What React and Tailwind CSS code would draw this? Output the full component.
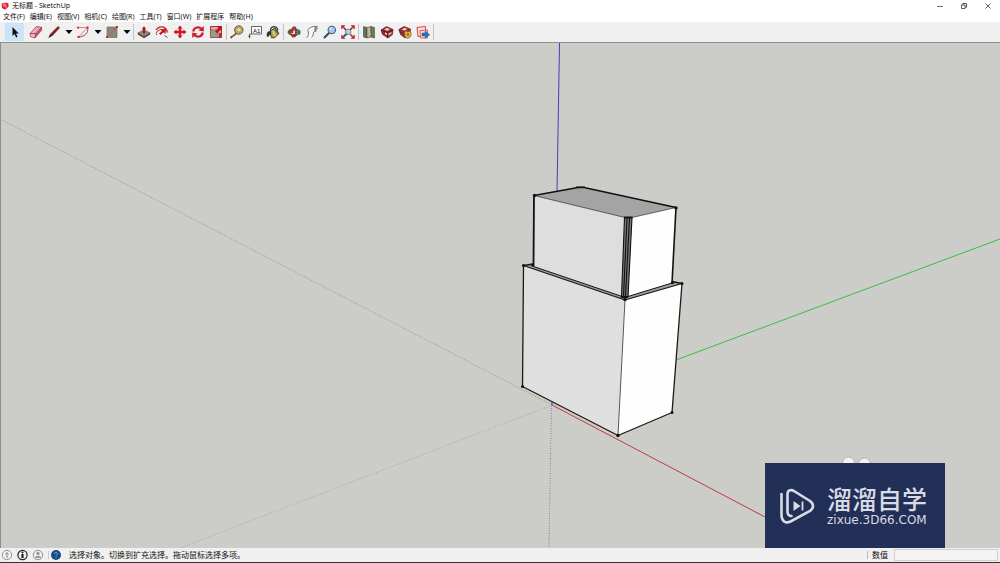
import React, { useState } from 'react';

const MENUS = ['文件(F)', '编辑(E)', '视图(V)', '相机(C)', '绘图(R)', '工具(T)', '窗口(W)', '扩展程序', '帮助(H)'];

// Dibujos de cada herramienta (lienzo de 14x14)
const ICONS = {
  select: <path d="M4.500 2v9l2-2 1.600 3.400 1.500-.7-1.600-3.300h2.800z" fill="#111" />,
  eraser: (
    <g stroke="#8d3348" strokeWidth=".7">
      <path d="M1 8.500 7.500 1.500l5 .8L7 9z" fill="#ee9aae" />
      <path d="M1 8.500 7 9l-1 3.800-4.500-1z" fill="#f4bcc9" />
      <path d="M7 9l5.500-6.700.2 3L6 12.800z" fill="#cf5f7b" />
      <path d="M4 7.500 8.500 3" stroke="#fbe0e6" />
    </g>
  ),
  pencil: (
    <g>
      <path d="M3 9.500 11 1.500l1.600 1.300L5 11z" fill="#8f1a1e" stroke="#5c1013" strokeWidth=".5" />
      <path d="M3 9.500 5 11l-3.800 2z" fill="#2a1b16" />
    </g>
  ),
  arc: (
    <g fill="none">
      <path d="M2 2.500h9.500L2.500 12" stroke="#dd7074" strokeWidth=".9" />
      <path d="M11.500 2.500C13 8 8 12 2.500 12" stroke="#8f4a4c" strokeWidth="1" />
      <path d="M1 1.800h2v1.600H1zM10.500 1.500h2v2h-2zM1.500 11h2v2h-2z" fill="#d2262c" />
    </g>
  ),
  rect: (
    <g>
      <path d="M2 2h10v10.500H2z" fill="#8d8577" stroke="#6a6458" strokeWidth=".6" />
      <path d="M3 11.500 11 3" stroke="#c4575a" strokeWidth=".9" />
      <path d="M1 11h2v2H1zM11 1h2v2h-2z" fill="#c9282e" />
    </g>
  ),
  pushpull: (
    <g>
      <path d="M.8 8 7 5l6.200 3L7 11.500z" fill="#8f8877" stroke="#4a453a" strokeWidth=".6" />
      <path d="M.8 8 7 11.500 13.200 8v1.500L7 13.200.8 9.500z" fill="#4b473c" />
      <path d="M7 1.200 9.300 4.200H8.100v4.300H5.900V4.200H4.700z" fill="#b4141b" />
    </g>
  ),
  follow: (
    <g fill="none">
      <path d="M1 5C4 .5 11 .5 12.500 7.500" stroke="#bb2930" strokeWidth="1.300" />
      <path d="M1 8.500c1.500-4 6-5 8-3" stroke="#c0545a" strokeWidth="1.100" />
      <path d="M5 4.500 11 3.500l-.5 5.500-1.900-1.700L5.500 10 4 8.500l3-2.700z" fill="#c8161d" />
      <path d="M9.500 10.500l3 2M2 9l-1 1" stroke="#5d564b" strokeWidth="1" />
    </g>
  ),
  move: (
    <path d="M7 .5 9.500 3.500H8.200V5.800H10.500V4.500L13.500 7l-3 2.500V8.200H8.200v2.300h1.300L7 13.500 4.500 10.500h1.300V8.200H3.500v1.300L.5 7l3-2.500v1.300h2.300V3.500H4.500z" fill="#cb1b22" />
  ),
  rotate: (
    <g fill="none" stroke="#c8202a" strokeWidth="2.200">
      <path d="M2.200 6.500C3 2 8 1.300 10.500 4" />
      <path d="M11.800 7.500C11 12 6 12.700 3.500 10" />
      <path d="M12.800 1v5.400l-5.300-1zM1.200 13V7.600l5.300 1z" fill="#c8202a" stroke="none" />
    </g>
  ),
  scale: (
    <g>
      <path d="M1.500 1.500h11v11h-11z" fill="#d9aaa6" stroke="#a93036" strokeWidth="1" />
      <path d="M1.500 5h7.500v7.500H1.500z" fill="#a2988a" stroke="#6d6257" strokeWidth=".6" />
      <path d="M7.500 1h5.500v5.500l-1.700-1.500L8 8.500 6 6.500l3.200-3.400z" fill="#bf1a21" />
      <path d="M10 8v4.500h2.500V8z" fill="#c4242b" />
    </g>
  ),
  tape: (
    <g>
      <path d="M1 12.500 7 8" stroke="#786833" strokeWidth="1.600" />
      <circle cx="8.800" cy="5" r="4.200" fill="#c9b366" stroke="#54481f" strokeWidth=".9" />
      <circle cx="9" cy="4.800" r="2.200" fill="#e9dba5" stroke="#84733a" strokeWidth=".5" />
      <path d="M1 11v2.500" stroke="#333" strokeWidth=".9" />
    </g>
  ),
  label: (
    <g>
      <path d="M3.500 1.500h10v7.500h-10z" fill="#fafafa" stroke="#444" strokeWidth=".8" />
      <path d="M3.500 9H1.500v4" fill="none" stroke="#444" strokeWidth=".8" />
      <path d="M.2 10.800h2.600L1.500 13.500z" fill="#444" />
      <text x="5" y="7.500" fontSize="6" fontFamily="Liberation Sans, sans-serif" fill="#111">A1</text>
    </g>
  ),
  paint: (
    <g>
      <path d="M3.500 6.500 9 3l4 5.500-4.500 4.200H5.500z" fill="#b0a050" stroke="#2c2a1b" strokeWidth=".9" />
      <path d="M4.500 6C.8 6 .3 9 1 12 3.500 11.500 3 9.500 5.500 8.500z" fill="#2f3526" />
      <path d="M4.500 6C4 .8 10.500 0 12 5.500" fill="none" stroke="#3c3c36" strokeWidth="1.300" />
      <path d="M6.500 6 9.500 11" stroke="#e8dc8c" strokeWidth="1.400" />
      <path d="M9 4.500 11.500 8" stroke="#55573c" strokeWidth="1.200" />
    </g>
  ),
  orbit: (
    <g fill="none">
      <ellipse cx="7" cy="7.200" rx="5.500" ry="2.800" stroke="#2a8a5b" strokeWidth="2" />
      <path d="M5.500 8C4.500 1 9 .5 9 6.500S6.500 12 5.500 10" stroke="#b3252f" strokeWidth="2" />
      <path d="M1 7 4.500 4.500v5z" fill="#b3252f" />
      <path d="M3.500 9.500h4.200l-2 3.500z" fill="#b3252f" />
      <path d="M9.500 7 13.200 5v5z" fill="#20734a" />
    </g>
  ),
  pan: (
    <path d="M1.500 12.500c2-.5 2-3 2-4.500 0-2-1.500-2-.5-3.500C4.500 3 6 2 8.500 1.500l4 .2-3 1.300 3 .5-3.200 1.500 2.200.7-3 1.300c-.2 2-.5 4.500-2 5.500" fill="#f7f7f7" stroke="#666" strokeWidth=".9" />
  ),
  zoom: (
    <g>
      <path d="M1.500 12.500 6 8" stroke="#3b4560" strokeWidth="2" strokeLinecap="round" />
      <circle cx="8.800" cy="5" r="3.700" fill="#a5c6e6" stroke="#45607f" strokeWidth="1.100" />
      <path d="M7 4.600c.3-1 1-1.500 2-1.500" stroke="#fff" fill="none" />
    </g>
  ),
  extents: (
    <g>
      <path d="M2.500 11.500 6 8.500" stroke="#3b4560" strokeWidth="1.800" />
      <path d="M2.500 2.500 5 5M11.500 2.500 9 5M11.500 11.500 9.500 9.500" stroke="#b31d26" strokeWidth="1.700" />
      <path d="M.3.300h4.200L.3 4.500zM13.700.300v4.200L9.500.300zM13.700 13.700H9.500l4.200-4.200zM.3 13.700V9.500l4.200 4.200z" fill="#b31d26" />
      <circle cx="7.200" cy="6.800" r="2.700" fill="#b4d4e8" stroke="#56788f" strokeWidth=".9" />
    </g>
  ),
  geo: (
    <g stroke="#4e4a35" strokeWidth=".6">
      <path d="M1.500 1.500 5 2.500v10.500l-3.500-1z" fill="#5b7253" />
      <path d="M5 2.500 9 1.500V12l-4 1z" fill="#b3b494" />
      <path d="M9 1.500l3.500 1V13L9 12z" fill="#6b7d5c" />
      <path d="M6 3.500 8.500 10" stroke="#dedbc6" />
    </g>
  ),
  warehouse: (
    <g>
      <path d="M1 5 6.500 1.500 13 4.500l-.5 5L8 13l-5.500-3.500z" fill="#8f2a30" stroke="#51171a" strokeWidth=".6" />
      <path d="M1 5l6.500 2.500L13 4.500M7.500 7.500V13" stroke="#5a1317" strokeWidth=".8" fill="none" />
      <path d="M4 4.500 7 2.800l3 1.400L7.500 6zM5 7.200l2 1v2l-2-1zM8.500 8.500l3-1.500v1.500l-3 2z" fill="#efc3c4" />
    </g>
  ),
  extension: (
    <g>
      <path d="M.8 4.500 6 1.500l6.500 2.500-.5 5.500L7 13 2.500 9.500z" fill="#8f2a30" stroke="#51171a" strokeWidth=".6" />
      <path d="M3.500 4.500 6.500 2.800l3 1.300L6.500 5.700z" fill="#efc3c4" />
      <path d="M6.500 7 8.500 5.800 9.800 7 11.800 6l1.500 2.500-.8 3.300L9.500 13.500 6.800 11.500z" fill="#dfae3a" stroke="#70531a" strokeWidth=".6" />
      <circle cx="9.900" cy="9.500" r="1.100" fill="#70531a" />
    </g>
  ),
  layout: (
    <g>
      <path d="M1 2.500 9.500 1.500v9L2 11.500z" fill="#fbe2e0" stroke="#d84045" strokeWidth="1" />
      <path d="M4 5.500 11.500 5v8H4.500z" fill="#fbd1cf" stroke="#d84045" strokeWidth=".8" />
      <path d="M6 8h3.200V6l4.500 3.800-4.500 3.400v-2.200H6z" fill="#2673bd" stroke="#174c80" strokeWidth=".4" />
    </g>
  ),
};

// Grupos de la barra; "caret" es la flecha del desplegable
const GROUPS = [
  ['eraser', 'pencil', 'caret', 'arc', 'caret', 'rect', 'caret'],
  ['pushpull', 'follow', 'move', 'rotate', 'scale'],
  ['tape', 'label', 'paint'],
  ['orbit', 'pan', 'zoom', 'extents'],
  ['geo', 'warehouse', 'extension', 'layout'],
];

const ToolIcon = ({ name }) => (
  <svg viewBox="0 0 14 14" className="size-3.5" aria-hidden="true">{ICONS[name]}</svg>
);

const TitleBar = () => (
  <header className="flex h-[11px] items-center justify-between bg-white pl-px">
    <div className="flex items-center gap-[3px]">
      <svg viewBox="0 0 8 8" className="size-2" aria-hidden="true">
        <path d="M.5 1.500 5 .5l2.500 1V5L4 7.800 1 6z" fill="#d9262d" />
        <path d="M1.500 2.500 5 2M2 4l3-.5V6" stroke="#f7b7b8" strokeWidth=".8" fill="none" />
      </svg>
      <h1 className="text-[7px] leading-[11px]">无标题 - SketchUp</h1>
    </div>
    <div className="flex">
      <button aria-label="最小化" className="flex h-[11px] w-6 items-center justify-center">
        <svg viewBox="0 0 6 6" className="size-1.5"><path d="M0 3.500h6" stroke="#444" strokeWidth=".8" /></svg>
      </button>
      <button aria-label="还原" className="flex h-[11px] w-6 items-center justify-center">
        <svg viewBox="0 0 6 6" className="size-1.5" fill="none" stroke="#333" strokeWidth=".8">
          <path d="M.5 2h3.500v3.500H.5zM1.800 2V.5h3.700v3.700H4" />
        </svg>
      </button>
      <button aria-label="关闭" className="flex h-[11px] w-6 items-center justify-center">
        <svg viewBox="0 0 6 6" className="size-1.5"><path d="M.5.500l5 5M5.500.500l-5 5" stroke="#333" strokeWidth=".8" /></svg>
      </button>
    </div>
  </header>
);

const Toolbar = ({ active, onPick }) => (
  <div className="flex h-[21px] items-center border-b border-[#8e8e8c] bg-[#f0f0f0] pl-[5px]">
    <button
      aria-label="select"
      onClick={() => onPick('select')}
      className={`mr-[3px] flex h-[18px] w-[19px] items-center justify-center ${active === 'select' ? 'bg-[#cce4f7]' : ''}`}
    >
      <ToolIcon name="select" />
    </button>
    {GROUPS.map((group) => (
      <div key={group[0]} className="flex items-center">
        {group.map((name, i) =>
          name === 'caret' ? (
            <button key={i} aria-label="更多" className="flex h-[18px] w-[11px] items-center justify-center">
              <svg viewBox="0 0 8 4" className="h-1 w-2"><path d="M.5 0h7L4 4z" fill="#000" /></svg>
            </button>
          ) : (
            <button
              key={i}
              aria-label={name}
              onClick={() => onPick(name)}
              className={`flex h-[18px] w-[18px] items-center justify-center ${active === name ? 'bg-[#cce4f7]' : ''}`}
            >
              <ToolIcon name={name} />
            </button>
          )
        )}
        <span className="mx-px h-4 w-px bg-[#c4c4c4]"></span>
      </div>
    ))}
  </div>
);

// Escena 3D: ejes y los dos volúmenes
const Scene = () => (
  <svg viewBox="1 43 999 505" preserveAspectRatio="xMidYMid slice" className="block h-full w-full" role="img" aria-label="模型">
    {/* Ejes */}
    <g fill="none" strokeWidth="1">
      <path d="M0 119 552 405" stroke="#c0807c" strokeDasharray="1 1.500" />
      <path d="M552 405 180 548" stroke="#8fb59b" strokeDasharray="1 1.500" />
      <path d="M551.500 403 549 548" stroke="#7e7eb8" strokeDasharray="1 1.500" />
      <path d="M559.500 43 557 192" stroke="#4040b8" />
      <path d="M676 360 1000 239" stroke="#3ebb44" />
      <path d="M552 405 824 548" stroke="#c03a40" />
      <path d="M552 405v-4" stroke="#4040b8" />
    </g>

    {/* Volumen inferior */}
    <path d="M523.500 265.500 533 264 672 281 682 283.500 625 300z" fill="#9c9c9a" />
    <path d="M523.500 266 625 300 618 435.500 522.500 386.500z" fill="#dfdfdf" />
    <path d="M625 300 682 284 672 412.500 618 435.500z" fill="#fefefe" />
    <g fill="none" stroke="#1a1a1a" strokeWidth="1.300" strokeLinejoin="round">
      <path d="M533 264 523.500 265.500 522.500 386.500 618 435.500 672 412.500 682 283.500 672 281.500" />
      <path d="M523.500 265.500 625 300 682 283.500" />
      <path d="M625 300 618 435.500" strokeWidth=".7" />
    </g>

    {/* Volumen superior */}
    <path d="M534 195.500 578 187.500h6L676 207.500 632 217.500h-8z" fill="#a4a4a4" />
    <path d="M534 195.500 625 217.500 621.500 296.500 533.500 266.500z" fill="#dedede" />
    <path d="M632 217.500 676 207.500 672 283 628 296.500z" fill="#fefefe" />
    <path d="M624.500 217.500h7.500L628 297h-6.500z" fill="#777" />
    <g fill="none" stroke="#111" strokeWidth="1.300" strokeLinejoin="round">
      <path d="M534 195.500 578 187.500h6L676 207.500" />
      <path d="M534 195.500 533.500 266.500" strokeWidth="1.800" />
      <path d="M676 207.500 672 283.500" strokeWidth="1.600" />
      <path d="M534 195.500 625 217.500M632 217.500 676 207.500" strokeWidth=".6" />
      <path d="M533.500 266.500 622 296.500M628 296.500 672 283" strokeWidth="1" />
      <path d="M624.500 217.500 621.500 297M627 218 623.500 297M629.500 218 625.500 297M632 217.500 628 297" strokeWidth="1.100" />
      <path d="M624 217.500h8.500M621 297h7" strokeWidth="2.200" />
    </g>

    {/* Vértices */}
    <g fill="#111">
      <circle cx="534.500" cy="195.500" r="1.700" />
      <circle cx="676" cy="208" r="1.700" />
      <path d="M576 186.500h9v1.500h-9z" />
      <circle cx="523.500" cy="265.500" r="1.500" />
      <circle cx="532.500" cy="265" r="1.500" />
      <circle cx="672.500" cy="282.500" r="1.500" />
      <circle cx="682" cy="283.500" r="1.500" />
      <circle cx="625" cy="299.500" r="1.800" />
      <circle cx="522.500" cy="386.500" r="1.500" />
      <circle cx="618" cy="435.500" r="1.700" />
      <circle cx="672" cy="412.500" r="1.500" />
    </g>

    <g fill="#f3f3f3" stroke="#b4b4b0" strokeWidth="1">
      <circle cx="848.500" cy="463" r="6" />
      <circle cx="864.500" cy="464" r="6" />
    </g>
  </svg>
);

const Watermark = () => (
  <div className="absolute right-[55px] bottom-0 flex h-[85px] w-[180px] items-center gap-3 bg-[#222f57] pl-[14px] text-[#d9dce4]">
    <svg viewBox="0 0 36 38" className="h-[38px] w-9 shrink-0" fill="none" stroke="currentColor" aria-hidden="true">
      <path d="M2.500 7v21c0 6 4 9 9 6.500L31 24c4-3 4-7 0-10L15 4C11.500 2 8.500 3.500 8.500 7v17.500c0 3 1.500 4.500 4 4.500" strokeWidth="2.600" strokeLinecap="round" />
      <path d="M14.500 14v10l7-5z" fill="currentColor" stroke="none" />
      <path d="M23.500 14.500v9" strokeWidth="1.800" />
    </svg>
    <div className="flex flex-col gap-1 whitespace-nowrap">
      <p className="font-['Noto_Sans_CJK_SC',sans-serif] text-[25px] leading-6 font-medium">溜溜自学</p>
      <p className="font-['DejaVu_Sans',sans-serif] text-[12px] leading-3">zixue.3D66.COM</p>
    </div>
  </div>
);

const StatusBar = () => (
  <footer className="flex h-[15px] items-center justify-between border-b border-[#333] bg-[#f0f0f0] pl-px text-[8px] leading-[14px]">
    <div className="flex items-center">
      <svg viewBox="0 0 64 12" className="h-3 w-16" fill="none" aria-hidden="true">
        <circle cx="6" cy="6" r="4.700" stroke="#888" strokeWidth=".9" />
        <path d="M6 9V4.500M4.500 5.500 6 3.500l1.500 2" stroke="#888" />
        <circle cx="21.500" cy="6" r="4.600" stroke="#222" strokeWidth="1.200" />
        <path d="M21.500 5v4" stroke="#111" strokeWidth="2" />
        <circle cx="21.500" cy="3.500" r="1" fill="#111" />
        <circle cx="37" cy="6" r="4.700" stroke="#888" strokeWidth=".9" />
        <circle cx="37" cy="4.500" r="1.700" fill="#999" />
        <path d="M34 9c.3-3 5.700-3 6 0z" fill="#999" />
        <path d="M47.500 2v8" stroke="#ccc" />
        <circle cx="55" cy="6" r="5" fill="#174d86" />
        <path d="M53.500 5c0-2 3-2 3-.2C56.500 6 55 6 55 7.200M55 8v1" stroke="#8fb6dc" strokeWidth=".9" />
      </svg>
      <p className="ml-1">选择对象。切换到扩充选择。拖动鼠标选择多项。</p>
    </div>
    <div className="flex items-center pr-0.5">
      <span className="mr-1 h-2 w-px bg-[#bbb]"></span>
      <label htmlFor="valor" className="mr-1.5">数值</label>
      <input id="valor" className="h-3 w-26 border border-[#d0d0d0] bg-[#f3f3f3] px-1 outline-none" />
    </div>
  </footer>
);

export default function App() {
  const [tool, setTool] = useState('select');

  return (
    <div className="flex h-screen flex-col overflow-hidden bg-[#f0f0f0] font-['Noto_Sans','Noto_Sans_CJK_SC',sans-serif] text-[#111]">
      <TitleBar />
      <nav className="flex h-[11px] items-center gap-[5px] bg-white pl-[3px] text-[7px] leading-[11px]">
        {MENUS.map((m) => (
          <button key={m} className="whitespace-nowrap">{m}</button>
        ))}
      </nav>
      <Toolbar active={tool} onPick={setTool} />
      <main className="relative min-h-0 flex-1 border-l border-[#8e8e8c] bg-[#cccdc8]">
        <Scene />
        <Watermark />
      </main>
      <StatusBar />
    </div>
  );
}
